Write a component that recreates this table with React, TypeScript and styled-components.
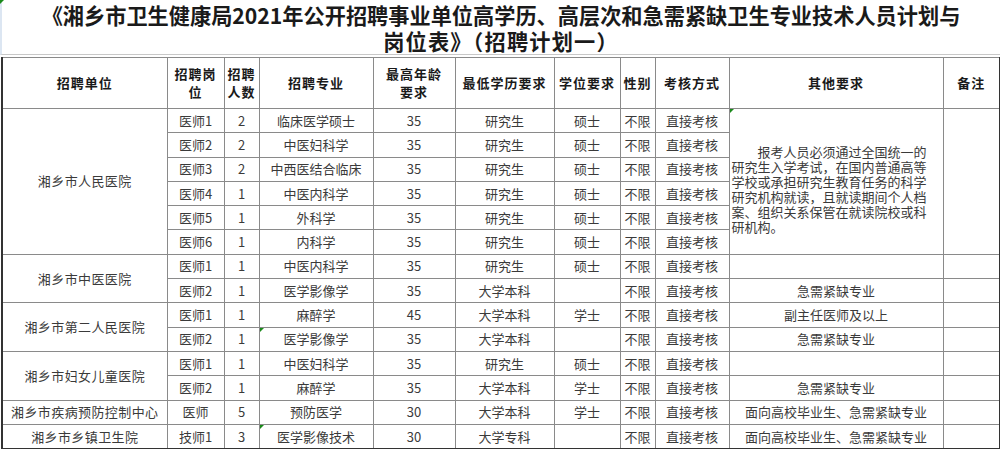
import React from "react";
import styled, { createGlobalStyle, css } from "styled-components";

const Global = createGlobalStyle`
  html, body { margin: 0; padding: 0; background: #ffffff; }
  body { font-family: "Noto Sans CJK SC", "Noto Sans", sans-serif; color: #222; }
`;

const Page = styled.div`
  width: 1000px;
  height: 449px;
  overflow: hidden;
  position: relative;
  background: #fff;
`;

const Title = styled.h1`
  margin: 0;
  height: 55px;
  box-sizing: border-box;
  padding-top: 2px;
  border-bottom: 1px solid #c8c8c8;
  border-left: 2px solid #dce6f2;
  font-family: "Noto Sans CJK SC", sans-serif;
  font-weight: 700;
  font-size: 21.2px;
  line-height: 26px;
  text-align: center;
  color: #1a1a1a;
  margin-bottom: 2px;
`;

const TitleTail = styled.span`
  letter-spacing: 1.2px;
`;

const Table = styled.table`
  margin-left: 1px;
  width: 998px;
  table-layout: fixed;
  border-collapse: collapse;
  border-left: 2px solid #333;
  border-right: 2px solid #333;
  border-bottom: 2px solid #333;
`;

const markCss = css`
  &::before {
    content: "";
    position: absolute;
    left: 0;
    top: 0;
    border-style: solid;
    border-width: 4px 4px 0 0;
    border-color: #1a8a1a transparent transparent transparent;
  }
`;

const HeadCell = styled.th`
  height: 50px;
  border: 1px solid #8a8a8a;
  padding: 0;
  font-weight: 700;
  font-size: 13px;
  line-height: 18px;
  letter-spacing: 1px;
  color: #1a1a1a;
  text-align: center;
  vertical-align: middle;
`;

const Cell = styled.td<{ $mark?: boolean; $left?: boolean }>`
  position: relative;
  height: 23.3px;
  border: 1px solid #8a8a8a;
  padding: 0;
  font-size: 13px;
  line-height: 16px;
  color: #3a3a3a;
  text-align: ${(p) => (p.$left ? "left" : "center")};
  vertical-align: middle;
  white-space: nowrap;
  ${(p) => p.$mark && markCss}
`;

const UnitCell = styled(Cell)`
  letter-spacing: 0.4px;
`;

const Para = styled.div`
  padding: 16px 0 0 2px;
  font-size: 13px;
  line-height: 15px;
  color: #3a3a3a;
`;

const ParaLine = styled.span<{ $indent?: boolean }>`
  display: block;
  padding-left: ${(p) => (p.$indent ? "2em" : "0")};
`;

const CornerMark = styled.span`
  position: absolute;
  left: 0;
  top: 0;
  border-style: solid;
  border-width: 4px 4px 0 0;
  border-color: #1a8a1a transparent transparent transparent;
`;

type Row = {
  unit?: string;
  span?: number;
  pos: string;
  num: string;
  major: string;
  age: string;
  edu: string;
  deg: string;
  other?: string;
  majorMark?: boolean;
};

const rows: Row[] = [
  { unit: "湘乡市人民医院", span: 6, pos: "医师1", num: "2", major: "临床医学硕士", age: "35", edu: "研究生", deg: "硕士" },
  { pos: "医师2", num: "2", major: "中医妇科学", age: "35", edu: "研究生", deg: "硕士" },
  { pos: "医师3", num: "2", major: "中西医结合临床", age: "35", edu: "研究生", deg: "硕士" },
  { pos: "医师4", num: "1", major: "中医内科学", age: "35", edu: "研究生", deg: "硕士" },
  { pos: "医师5", num: "1", major: "外科学", age: "35", edu: "研究生", deg: "硕士" },
  { pos: "医师6", num: "1", major: "内科学", age: "35", edu: "研究生", deg: "硕士" },
  { unit: "湘乡市中医医院", span: 2, pos: "医师1", num: "1", major: "中医内科学", age: "35", edu: "研究生", deg: "硕士", other: "" },
  { pos: "医师2", num: "1", major: "医学影像学", age: "35", edu: "大学本科", deg: "", other: "急需紧缺专业" },
  { unit: "湘乡市第二人民医院", span: 2, pos: "医师1", num: "1", major: "麻醉学", age: "45", edu: "大学本科", deg: "学士", other: "副主任医师及以上" },
  { pos: "医师2", num: "1", major: "医学影像学", age: "35", edu: "大学本科", deg: "", other: "急需紧缺专业", majorMark: true },
  { unit: "湘乡市妇女儿童医院", span: 2, pos: "医师1", num: "1", major: "中医妇科学", age: "35", edu: "研究生", deg: "硕士", other: "" },
  { pos: "医师2", num: "1", major: "麻醉学", age: "35", edu: "大学本科", deg: "学士", other: "急需紧缺专业" },
  { unit: "湘乡市疾病预防控制中心", span: 1, pos: "医师", num: "5", major: "预防医学", age: "30", edu: "大学本科", deg: "学士", other: "面向高校毕业生、急需紧缺专业" },
  { unit: "湘乡市乡镇卫生院", span: 1, pos: "技师1", num: "3", major: "医学影像技术", age: "30", edu: "大学专科", deg: "", other: "面向高校毕业生、急需紧缺专业", majorMark: true },
];

const widths = [165, 57, 35, 114, 82, 99, 66, 35, 74, 214, 57];

const paraLines = [
  "报考人员必须通过全国统一的",
  "研究生入学考试，在国内普通高等",
  "学校或承担研究生教育任务的科学",
  "研究机构就读，且就读期间个人档",
  "案、组织关系保管在就读院校或科",
  "研机构。",
];

export default function App() {
  return (
    <Page>
      <Global />
      <CornerMark />
      <Title>
        《湘乡市卫生健康局2021年公开招聘事业单位高学历、高层次和急需紧缺卫生专业技术人员计划与
        <br />
        <TitleTail>岗位表》（招聘计划一）</TitleTail>
      </Title>
      <Table>
        <colgroup>
          {widths.map((w, i) => (
            <col key={i} style={{ width: w }} />
          ))}
        </colgroup>
        <thead>
          <tr>
            <HeadCell>招聘单位</HeadCell>
            <HeadCell>
              招聘岗
              <br />位
            </HeadCell>
            <HeadCell>
              招聘
              <br />
              人数
            </HeadCell>
            <HeadCell>招聘专业</HeadCell>
            <HeadCell>
              最高年龄
              <br />
              要求
            </HeadCell>
            <HeadCell>最低学历要求</HeadCell>
            <HeadCell>学位要求</HeadCell>
            <HeadCell>性别</HeadCell>
            <HeadCell>考核方式</HeadCell>
            <HeadCell>其他要求</HeadCell>
            <HeadCell>备注</HeadCell>
          </tr>
        </thead>
        <tbody>
          {rows.map((r, i) => (
            <tr key={i}>
              {r.unit && <UnitCell rowSpan={r.span}>{r.unit}</UnitCell>}
              <Cell>{r.pos}</Cell>
              <Cell>{r.num}</Cell>
              <Cell $mark={r.majorMark}>{r.major}</Cell>
              <Cell>{r.age}</Cell>
              <Cell>{r.edu}</Cell>
              <Cell>{r.deg}</Cell>
              <Cell>不限</Cell>
              <Cell>直接考核</Cell>
              {i === 0 && (
                <Cell rowSpan={6} $left $mark>
                  <Para>
                    {paraLines.map((l, k) => (
                      <ParaLine key={k} $indent={k === 0}>
                        {l}
                      </ParaLine>
                    ))}
                  </Para>
                </Cell>
              )}
              {r.other !== undefined && <Cell>{r.other}</Cell>}
              {i === 0 && <Cell rowSpan={6} />}
              {i >= 6 && <Cell />}
            </tr>
          ))}
        </tbody>
      </Table>
    </Page>
  );
}
